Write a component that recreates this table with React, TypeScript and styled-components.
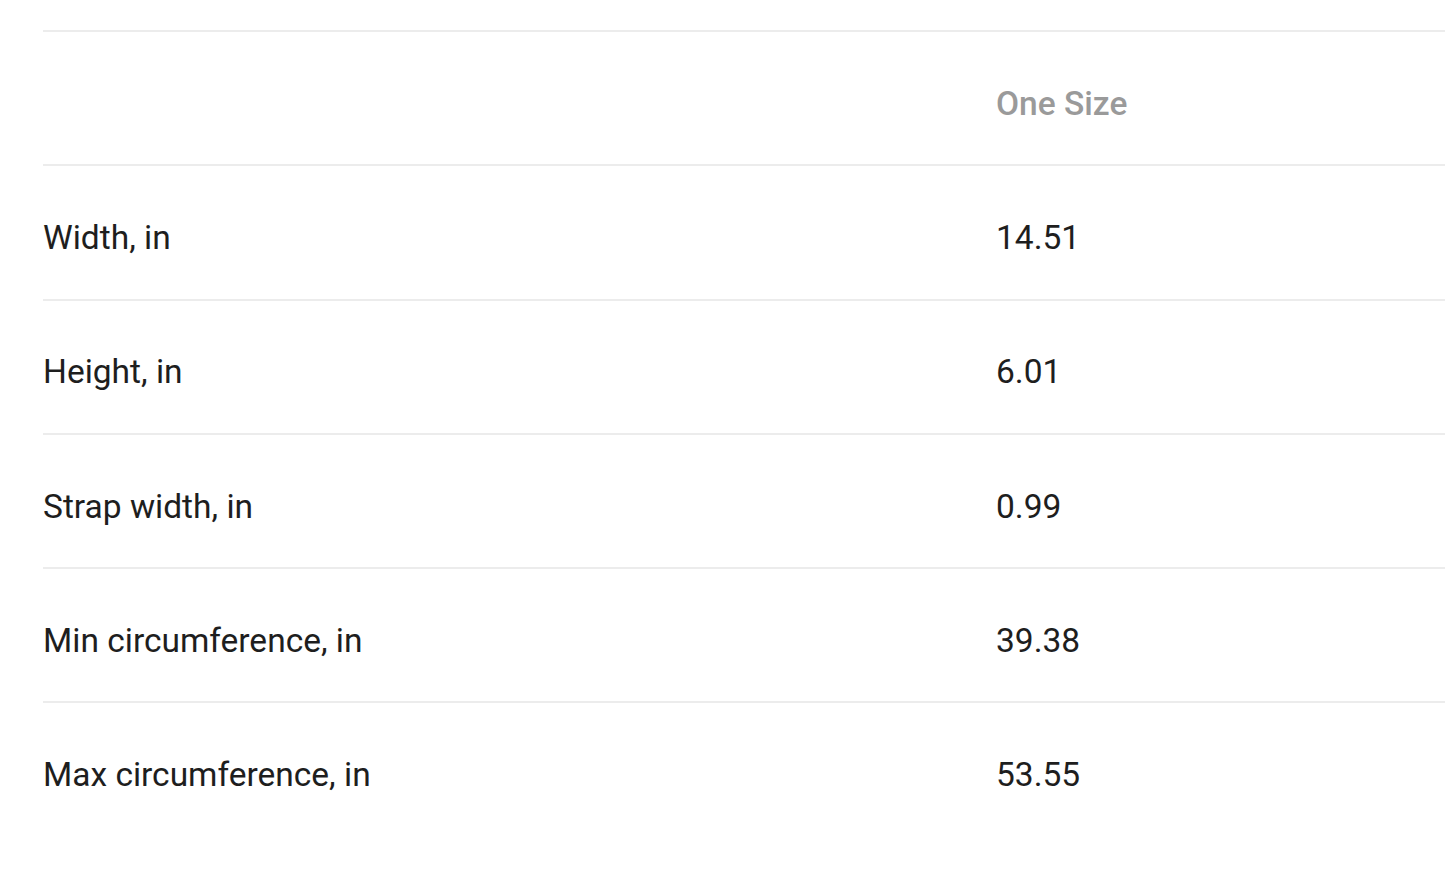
import React from "react";
import styled, { createGlobalStyle } from "styled-components";

const Global = createGlobalStyle`
  html, body { margin: 0; padding: 0; background: #ffffff; }
  body { font-family: Roboto, "Noto Sans", sans-serif; overflow: hidden; }
`;

const Page = styled.div`
  padding: 30px 0 0 43px;
  width: 1445px;
  box-sizing: border-box;
`;

const Table = styled.div`
  display: flex;
  flex-direction: column;
  width: 1420px;
`;

const Row = styled.div`
  display: grid;
  grid-template-columns: 953px 1fr;
  height: 134.3px;
  box-sizing: border-box;
  border-top: 2px solid #ececec;
  align-items: center;
  padding-top: 10px;
`;

const Label = styled.div`
  font-size: 33.5px;
  color: #1e1e1e;
`;

const Value = styled.div<{ $head?: boolean }>`
  font-size: 33.5px;
  color: ${(p) => (p.$head ? "#9a9a9a" : "#1e1e1e")};
  font-weight: ${(p) => (p.$head ? 500 : 400)};
`;

const rows = [
  ["Width, in", "14.51"],
  ["Height, in", "6.01"],
  ["Strap width, in", "0.99"],
  ["Min circumference, in", "39.38"],
  ["Max circumference, in", "53.55"],
];

export default function App() {
  return (
    <>
      <Global />
      <Page>
        <Table>
          <Row>
            <Label />
            <Value $head>One Size</Value>
          </Row>
          {rows.map(([l, v]) => (
            <Row key={l}>
              <Label>{l}</Label>
              <Value>{v}</Value>
            </Row>
          ))}
        </Table>
      </Page>
    </>
  );
}
